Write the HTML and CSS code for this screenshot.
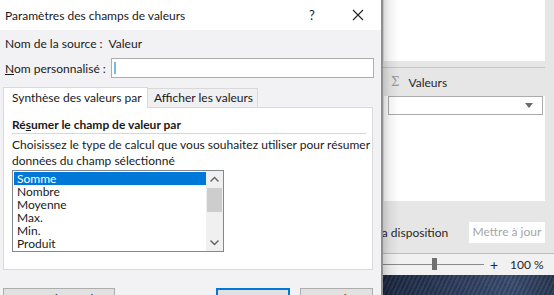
FILE: index.html
```html
<!DOCTYPE html>
<html lang="fr">
<head>
<meta charset="utf-8">
<title>Paramètres des champs de valeurs</title>
<link rel="stylesheet" href="styles.css">
</head>
<body>
<div class="screen">
  <div class="dialog">
    <div class="titlebar">
      <span class="title">Paramètres des champs de valeurs</span>
      <span class="help">?</span>
      <svg class="close" width="12" height="12" viewBox="0 0 12 12"><path d="M1 1 L11 11 M11 1 L1 11" stroke="#222" stroke-width="1.1" fill="none"/></svg>
    </div>
    <div class="dbody">
      <div class="row src"><span class="lbl">Nom de la source :</span><span class="val">Valeur</span></div>
      <div class="row custom"><span class="lbl"><u>N</u>om personnalisé :</span><div class="input"><span class="caret"></span></div></div>
      <div class="tabs">
        <div class="tab active">Synthèse des valeurs par</div>
        <div class="tab">Afficher les valeurs</div>
      </div>
      <div class="panel">
        <div class="heading">Ré<u>s</u>umer le champ de valeur par</div>
        <div class="rule"></div>
        <p class="desc">Choisissez le type de calcul que vous souhaitez utiliser pour résumer<br>données du champ sélectionné</p>
        <div class="listbox">
          <ul class="items">
            <li class="sel">Somme</li>
            <li>Nombre</li>
            <li>Moyenne</li>
            <li>Max.</li>
            <li>Min.</li>
            <li>Produit</li>
          </ul>
          <div class="scrollbar">
            <svg class="arr" width="17" height="17" viewBox="0 0 17 17"><path d="M4.5 10.5 L8.5 6.5 L12.5 10.5" stroke="#606060" stroke-width="1.4" fill="none"/></svg>
            <div class="thumb"></div>
            <div class="track"></div>
            <svg class="arr" width="17" height="17" viewBox="0 0 17 17"><path d="M4.5 6.5 L8.5 10.5 L12.5 6.5" stroke="#606060" stroke-width="1.4" fill="none"/></svg>
          </div>
        </div>
      </div>
      <div class="buttons">
        <button class="btn wide">Format de nombre</button>
        <span class="spacer"></span>
        <button class="btn ok">OK</button>
        <button class="btn">Annuler</button>
      </div>
    </div>
  </div>

  <div class="pane">
    <div class="shadow"></div>
    <div class="whitebox top"></div>
    <div class="hline"></div>
    <div class="areahead"><span class="sigma">Σ</span><span>Valeurs</span></div>
    <div class="whitebox list">
      <div class="dropdown"><svg width="8" height="5" viewBox="0 0 8 5"><path d="M0 0 H8 L4 5 Z" fill="#6a6a6a"/></svg></div>
    </div>
    <div class="defer">
      <span class="deftext">la disposition</span>
      <span class="update">Mettre à jour</span>
    </div>
    <div class="status">
      <div class="slider"><span class="thumbz"></span></div>
      <span class="plus">+</span>
      <span class="zoom">100 %</span>
    </div>
    <div class="desktop"></div>
  </div>
</div>
</body>
</html>
```

FILE: styles.css
```css
* { box-sizing: border-box; }
html, body { margin: 0; padding: 0; }
body {
  width: 554px;
  height: 295px;
  overflow: hidden;
  font-family: "Lato", "Liberation Sans", sans-serif;
  font-size: 12px;
  color: #1a1a1a;
  white-space: nowrap;
}
.screen {
  display: flex;
  width: 554px;
  height: 295px;
}

/* ---------- dialog ---------- */
.dialog {
  width: 381px;
  flex: none;
  background: #f2f1f4;
  display: flex;
  flex-direction: column;
  position: relative;
  z-index: 2;
  overflow: hidden;
}
.titlebar {
  height: 30px;
  flex: none;
  background: #fff;
  display: flex;
  align-items: center;
  padding-left: 5px;
}
.title { flex: 1; color: #1a1a1a; font-size: 12px; }
.help { width: 14px; text-align: center; margin-right: 33px; font-size: 13px; }
.close { margin-right: 17px; }

.dbody { padding: 0; }
.row { display: flex; align-items: center; padding-left: 5px; }
.src { margin-top: 6px; height: 16px; line-height: 16px; }
.src .val { margin-left: 6px; }
.custom { margin-top: 6px; height: 20px; }
.custom .lbl { width: 106px; }
.input {
  width: 263px;
  height: 20px;
  background: #fff;
  border: 1px solid #adadad;
  position: relative;
}
.caret {
  position: absolute;
  left: 2px; top: 3px;
  width: 2px; height: 12px;
  background: #7fb6e3;
}

.tabs { display: flex; margin-top: 9px; margin-left: 3px; height: 20px; align-items: flex-end; position: relative; z-index: 1; }
.tab {
  height: 19px;
  padding: 0 6px;
  line-height: 17px;
  border: 1px solid #d9d9d9;
  border-bottom: none;
  background: #f0eff2;
}
.tab.active {
  height: 21px;
  width: 145px;
  padding-left: 8px;
  background: #fff;
  margin-bottom: -1px;
  line-height: 19px;
}
.tab:not(.active) { border-left: none; width: 110px; }

.panel {
  margin-left: 3px;
  width: 370px;
  height: 163px;
  background: #fff;
  border: 1px solid #d9d9d9;
  padding: 9px 6px 0 8px;
}
.heading { font-weight: bold; line-height: 16px; height: 16px; }
.rule { height: 1px; background: #d8d8d8; margin-top: 0; }
.desc { margin: 3px 0 0; line-height: 16px; }
.listbox {
  margin-top: 1px;
  width: 212px;
  height: 82px;
  border: 1px solid #828790;
  display: flex;
  background: #fff;
}
.items {
  list-style: none;
  margin: 0;
  padding: 1px 0 0 1px;
  flex: 1;
}
.items li {
  height: 13px;
  line-height: 13px;
  padding-left: 3px;
  color: #1a1a1a;
}
.items li.sel { background: #0078d7; color: #fff; }
.scrollbar {
  width: 17px;
  background: #f0f0f0;
  display: flex;
  flex-direction: column;
}
.arr { display: block; flex: none; }
.thumb { height: 24px; margin: 0 1px; background: #cdcdcd; flex: none; }
.track { flex: 1; }

.buttons { display: flex; margin-top: 18px; padding: 0 8px 0 3px; }
.btn {
  font: inherit;
  height: 23px;
  line-height: 17px;
  background: #e1e1e1;
  border: 1px solid #adadad;
  padding: 1px 0 0;
  color: #1a1a1a;
  display: flex;
  align-items: flex-start;
  justify-content: center;
}
.btn.wide { width: 112px; }
.spacer { flex: 1; }
.btn.ok { width: 74px; border: 2px solid #0078d7; margin-right: 10px; padding-top: 0; }
.btn:last-child { width: 73px; }

/* ---------- excel pane ---------- */
.pane {
  flex: 1;
  position: relative;
  background: #e6e6e6;
  border-left: 2px solid #8f8f8f;
  display: flex;
  flex-direction: column;
  overflow: hidden;
}
.shadow {
  position: absolute;
  left: 0; top: 0; bottom: 0;
  width: 16px;
  background: linear-gradient(to right, rgba(0,0,0,0.16), rgba(0,0,0,0.06) 40%, rgba(0,0,0,0));
  z-index: 3;
}
.whitebox { background: #fff; margin: 0 9px 0 1px; flex: none; }
.whitebox.top { height: 61px; }
.hline { height: 1px; background: #c6c6c6; margin: 6px 9px 0 0; flex: none; }
.areahead {
  height: 28px;
  flex: none;
  display: flex;
  align-items: center;
  padding-left: 8px;
  color: #262626;
}
.sigma { color: #9a9a9a; font-size: 12px; margin-right: 9px; font-family: "DejaVu Serif", serif; }
.whitebox.list { height: 105px; padding: 0 2px 0 4px; }
.dropdown {
  height: 19px;
  border: 1px solid #ababab;
  background: #fff;
  display: flex;
  align-items: center;
  justify-content: flex-end;
  padding-right: 9px;
}
.defer {
  height: 52px;
  flex: none;
  display: flex;
  align-items: center;
  padding-top: 10px;
}
.deftext { margin-left: -4px; flex: 1; color: #262626; }
.update {
  width: 76px;
  height: 21px;
  line-height: 20px;
  background: #fff;
  color: #a6a6a6;
  text-align: center;
  margin-right: 9px;
}
.status {
  height: 22px;
  flex: none;
  border-top: 1px solid #bdbdbd;
  background: #f1f1f1;
  display: flex;
  align-items: center;
  color: #262626;
}
.slider {
  width: 101px;
  height: 1px;
  background: #8a8a8a;
  position: relative;
}
.thumbz {
  position: absolute;
  left: 49px; top: -6px;
  width: 5px; height: 12px;
  background: #707070;
}
.plus { margin-left: 5px; font-size: 14px; width: 10px; text-align: center; }
.zoom { margin-left: 11px; }
.desktop {
  flex: 1;
  background:
    repeating-linear-gradient(115deg, rgba(255,255,255,0.06) 0 2px, rgba(0,0,0,0.08) 2px 4px),
    linear-gradient(90deg, #1a263f, #2b3a5a 40%, #384a6e 75%, #26354f);
}
```
